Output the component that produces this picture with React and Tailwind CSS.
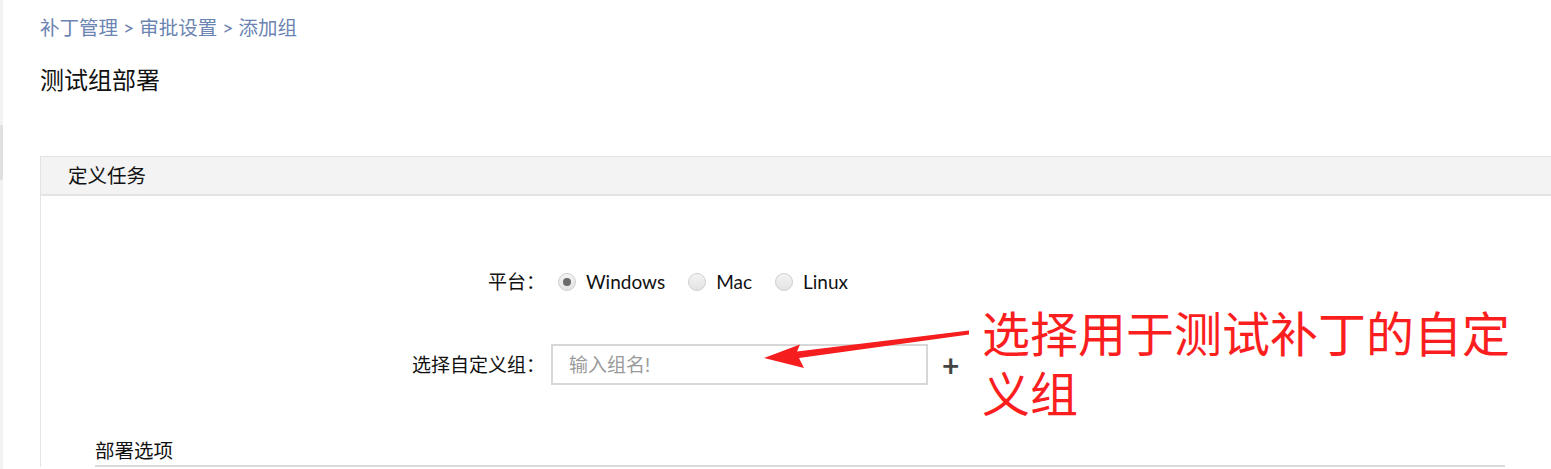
import { useState } from 'react';

const FONT = "font-['Lato','Noto_Sans_CJK_SC',sans-serif]";

// Radio with a grey bevelled circle
function Radio({ checked, label, onSelect }) {
  return (
    <label className="flex items-center cursor-pointer" onClick={onSelect}>
      <span className="flex h-[18px] w-[18px] items-center justify-center rounded-full border border-[#cfcfcf] bg-gradient-to-b from-[#f4f4f4] to-[#e2e2e2]">
        {checked && <span className="h-[8px] w-[8px] rounded-full bg-[#6a6a6a]" />}
      </span>
      <span className="ml-[10px] text-[19px] leading-[28px] text-[#111]">{label}</span>
    </label>
  );
}

export default function App() {
  const [platform, setPlatform] = useState('Windows');

  return (
    <div className={`relative flex h-[469px] overflow-hidden bg-white ${FONT}`}>
      {/* Sidebar edge */}
      <div className="w-[3px] shrink-0 bg-[#f2f2f2] pt-[125px]">
        <div className="h-[55px] bg-[#e0e0e0]" />
      </div>

      <main className="flex-1 pl-[37px] pt-[14px]">
        {/* Breadcrumb */}
        <div className="text-[19.5px] leading-[28px] text-[#6c84b2]">
          补丁管理 &gt; 审批设置 &gt; 添加组
        </div>

        <h1 className="mt-[22px] text-[24px] leading-[32px] text-[#111]">测试组部署</h1>

        {/* Panel */}
        <section className="mt-[60px] -mr-[20px] border-l border-t border-[#e3e3e3]">
          <div className="flex h-[39px] items-center border-b-2 border-[#e4e4e4] bg-[#f3f3f3] pl-[27px] text-[19.5px] text-[#111]">
            定义任务
          </div>

          <div className="pt-[72px]">
            <div className="grid grid-cols-[504px_auto] items-center gap-x-[6px] gap-y-[48px]">
              <div className="text-right text-[19px] leading-[28px] text-[#111]">平台：</div>
              <div className="ml-[7px] flex items-center gap-[23px]">
                {['Windows', 'Mac', 'Linux'].map((p) => (
                  <Radio key={p} label={p} checked={platform === p} onSelect={() => setPlatform(p)} />
                ))}
              </div>

              <div className="text-right text-[19px] leading-[28px] text-[#111]">选择自定义组：</div>
              <div className="flex items-center">
                <input
                  type="text"
                  placeholder="输入组名!"
                  className="h-[41px] w-[377px] border-2 border-[#d7d7d7] px-[16px] text-[19px] text-[#333] placeholder:text-[#9a9a9a] focus:outline-none"
                />
                <span className="ml-[14px] text-[30px] font-bold leading-none text-[#444]">+</span>
              </div>
            </div>

            {/* Deploy options */}
            <div className="ml-[54px] mr-[66px] mt-[52px] border-b-2 border-[#d9d9d9] text-[19.5px] leading-[28px] text-[#111]">
              部署选项
            </div>
          </div>
        </section>
      </main>

      {/* Annotation */}
      <svg className="pointer-events-none absolute left-0 top-0" width="1551" height="469">
        <polygon
          points="969,330.5 969,334.5 799,358 804,368 764,358 800,344.5 797,351.5"
          fill="#f51d1d"
        />
      </svg>
      <div className="absolute left-[982px] top-[304px] w-[540px] text-[48px] leading-[60px] text-[#fb1e1e]">
        选择用于测试补丁的自定义组
      </div>
    </div>
  );
}
